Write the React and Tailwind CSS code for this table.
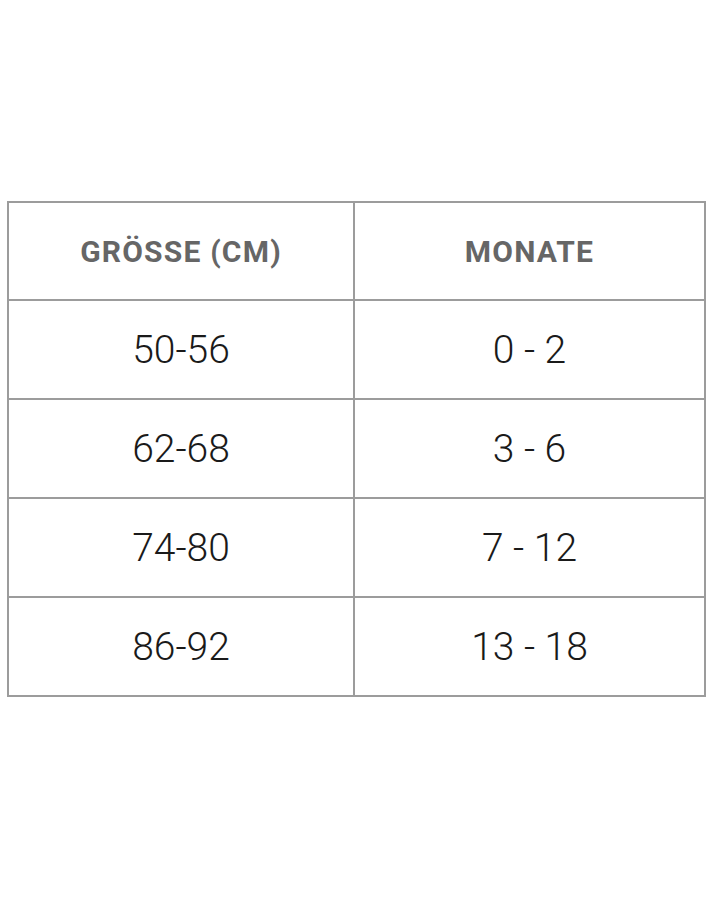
import React from 'react'

const rows = [
  ['50-56', '0 - 2'],
  ['62-68', '3 - 6'],
  ['74-80', '7 - 12'],
  ['86-92', '13 - 18'],
]

const App = () => {
  return (
    <div className="w-[714px] h-[900px] bg-white pt-[201px] pl-[7px]" style={{ fontFamily: 'Roboto, "Liberation Sans", sans-serif' }}>
      <div className="w-[699px] grid grid-cols-[346px_1fr] border-t-2 border-l-2 border-[#9c9c9c]">
        <div className="h-[98px] border-r-2 border-b-2 border-[#9c9c9c] flex items-center justify-center text-[30px] font-bold text-[#666] tracking-[0.04em]">
          GRÖSSE (CM)
        </div>
        <div className="h-[98px] border-r-2 border-b-2 border-[#9c9c9c] flex items-center justify-center text-[30px] font-bold text-[#666] tracking-[0.04em]">
          MONATE
        </div>
        {rows.map(([size, months]) => (
          <React.Fragment key={size}>
            <div className="h-[99px] pt-[2px] border-r-2 border-b-2 border-[#9c9c9c] flex items-center justify-center text-[39px] font-light text-[#1a1a1a]">
              {size}
            </div>
            <div className="h-[99px] pt-[2px] border-r-2 border-b-2 border-[#9c9c9c] flex items-center justify-center text-[39px] font-light text-[#1a1a1a]">
              {months}
            </div>
          </React.Fragment>
        ))}
      </div>
    </div>
  )
}

export default App
